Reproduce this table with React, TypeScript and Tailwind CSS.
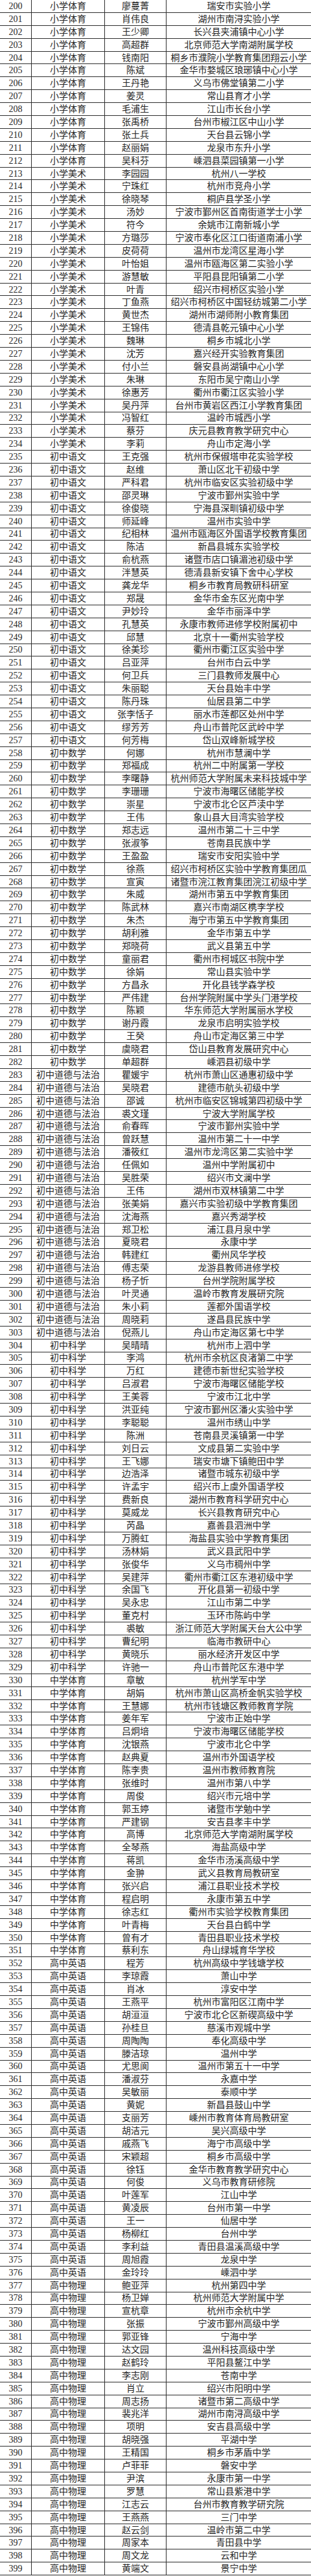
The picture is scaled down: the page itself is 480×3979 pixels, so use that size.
import React from "react";

const groups: [string, string][] = [
  ["小学体育", `廖蔓菁|瑞安市实验小学
肖伟良|湖州市南浔实验小学
王少卿|长兴县夹浦镇中心小学
高超群|北京师范大学南湖附属学校
钱南阳|桐乡市濮院小学教育集团翔云小学
陈斌|金华市婺城区琅琊镇中心小学
王丹艳|义乌市佛堂镇第二小学
姜灵|常山县育才小学
毛浦生|江山市长台小学
张禹桥|台州市椒江区中山小学
张土兵|天台县云锦小学
赵丽娟|龙泉市东升小学
吴科芬|嵊泗县菜园镇第一小学`],
  ["小学美术", `李园园|杭州八一学校
宁珠红|杭州市竞舟小学
徐晓琴|桐庐县学圣小学
汤妙|宁波市鄞州区首南街道学士小学
符今|余姚市江南新城小学
方璐莎|宁波市奉化区江口街道南浦小学
皮荷荷|温州市龙湾区星海小学
叶怡姐|温州市瓯海区第二实验小学
游慧敏|平阳县昆阳镇第二小学
叶青|绍兴市柯桥区实验小学
丁鱼燕|绍兴市柯桥区中国轻纺城第二小学
黄世杰|湖州市湖师附小教育集团
王锦伟|德清县乾元镇中心小学
魏琳|桐乡市城北小学
沈芳|嘉兴经开实验教育集团
付小兰|磐安县尚湖镇中心小学
朱琳|东阳市吴宁南山小学
徐惠芳|衢州市衢江区实验小学
吴丹萍|台州市黄岩区西江小学教育集团
冯智红|温岭市城西小学
蔡芬|庆元县教育教学研究中心
李莉|舟山市定海小学`],
  ["初中语文", `王克强|杭州市保俶塔申花实验学校
赵维|萧山区北干初级中学
严科君|杭州市临安区实验初级中学
邵灵琳|宁波市鄞州实验中学
徐俊晓|宁海县深甽镇初级中学
师延峰|温州市实验中学
纪相林|温州市瓯海区外国语学校教育集团
陈洁|新昌县城东实验学校
俞杭燕|诸暨市店口镇湄池初级中学
泮慧英|德清县新安镇下舍中心学校
龚龙华|桐乡市教育局教研科研室
郑晟|金华市金东区光南中学
尹妙玲|金华市丽泽中学
孔慧英|永康市教师进修学校附属初中
邱慧|北京十一衢州实验学校
徐美珍|衢州市衢江区实验中学
吕亚萍|台州市白云中学
何卫兵|三门县教师发展中心
朱丽聪|天台县始丰中学
陈丹珠|仙居县第二中学
张李恬子|丽水市莲都区处州中学
缪芳芳|舟山市普陀区武岭中学
何芳梅|岱山双峰新城学校`],
  ["初中数学", `何娜|杭州市慧澜中学
郑福成|杭州二中附属第一学校
李曙静|杭州师范大学附属未来科技城中学
李珊珊|宁波市海曙区储能学校
崇星|宁波市北仑区芦渎中学
王伟|象山县大目湾实验学校
郑志远|温州市第二十三中学
张淑筝|苍南县民族中学
王盈盈|瑞安市安阳实验中学
徐燕|绍兴市柯桥区实验中学教育集团瓜
宣寅|诸暨市浣江教育集团浣江初级中学
朱威|湖州市第五中学教育集团
陈武林|嘉兴市南湖区槜李学校
朱杰|海宁市第五中学教育集团
胡利雅|金华市第五中学
郑晓荷|武义县第五中学
童丽君|衢州市柯城区书院中学
徐娟|常山县实验中学
方昌永|开化县钱学森学校
严伟建|台州学院附属中学头门港学校
陈颖|华东师范大学附属丽水学校
谢丹霞|龙泉市启明实验学校
王癸|舟山市定海区第三中学
虞晓君|岱山县教育发展研究中心
单超群|嵊泗县初级中学`],
  ["初中道德与法治", `瞿媛宇|杭州市萧山区通惠初级中学
吴晓君|建德市航头初级中学
邵诚|杭州市临安区锦城第四初级中学
裘文瑾|宁波大学附属学校
俞春晖|宁波市鄞州实验中学
曾跃慧|温州市第二十一中学
潘筱红|温州市龙湾区第二实验中学
任佩如|温州中学附属初中
吴胜荣|绍兴市文澜中学
王伟|湖州市双林镇第二中学
张美娟|嘉兴市实验初级中学教育集团
沈海燕|嘉兴秀湖学校
郑卫松|浦江县月泉中学
夏晓君|永康中学
韩建红|衢州风华学校
傅志荣|龙游县教师进修学校
杨子忻|台州学院附属学校
叶灵通|温岭市教育发展研究院
朱小莉|莲都外国语学校
周晓莉|遂昌县民族中学
倪燕儿|舟山市定海区第七中学`],
  ["初中科学", `吴晴晴|杭州市上泗中学
李鸿|杭州市余杭区良渚第二中学
万红|建德市新世纪实验学校
吕淑君|宁波市海曙区储能学校
王美蓉|宁波市江北中学
洪亚纯|宁波市鄞州区潘火实验中学
李聪聪|温州市绣山中学
陈洲|苍南县灵溪镇第一中学
刘日云|文成县第二实验中学
王飞娜|瑞安市塘下镇鲍田中学
边浩泽|诸暨市城东初级中学
许孟宇|绍兴市上虞外国语学校
费新良|湖州市教育科学研究中心
莫威龙|长兴县教育研究中心
芮晶|嘉善县泗洲中学
万腾虹|海盐县实验中学教育集团
汤林娟|武义县武阳中学
张俊华|义乌市稠州中学
吴建萍|衢州市衢江区东港初级中学
余国飞|开化县第一初级中学
吴永忠|江山市第二中学
董克村|玉环市陈屿中学
裘敏|浙江师范大学附属天台大公中学
曹纪明|临海市教研中心
黄晓乐|丽水经济开发区中学
许驰一|舟山市普陀区东港中学`],
  ["中学体育", `章敏|杭州学军中学
胡娟|杭州市萧山区高桥金帆实验学校
王慧娜|杭州市钱塘区教师教育学院
姜年军|宁波市正始中学
吕炯培|宁波市海曙区储能学校
沈银燕|宁波市北仑中学
赵典夏|温州市外国语学校
陈李贵|温州市教师教育院
张维时|温州市第八中学
周俊|绍兴市元培中学
郭玉婷|诸暨市学勉中学
严建钢|安吉县孝丰中学
高博|北京师范大学南湖附属学校
全琴燕|海盐高级中学
蒋凯|金华市汤溪高级中学
金翀|武义县教育局教研室
张兴启|浦江县职业技术学校
程启明|永康市第五中学
徐志红|衢州市实验学校教育集团
叶青梅|天台县白鹤中学
曾有才|青田县职业技术学校
蔡利东|舟山绿城育华学校`],
  ["高中英语", `程芳|杭州高级中学钱塘学校
李琼霞|萧山中学
肖冰|淳安中学
王燕平|杭州市富阳区江南中学
胡洹洹|宁波市北仑区新碶高级中学
孙桂旦|慈溪市观城中学
周陶陶|奉化高级中学
滕洁琼|温州中学
尤思阆|温州市第五十一中学
潘淑芬|永嘉中学
吴敏丽|泰顺中学
黄妮|新昌县鼓山中学
支丽芳|嵊州市教育体育局教研室
胡洁元|吴兴高级中学
戚燕飞|海宁市高级中学
宋颖超|桐乡市高级中学
徐钰|金华市教育教学研究中心
何俊|义乌市教育研修院
叶莲军|江山中学
黄凌辰|台州市第一中学
王一|仙居中学
杨柳红|台州中学
李利益|青田县温溪高级中学
周旭霞|龙泉中学
金玲玲|嵊泗中学`],
  ["高中物理", `鲍亚萍|杭州第四中学
杨卫婵|杭州师范大学附属中学
宣杭章|杭州市余杭中学
张振|宁波市鄞州高级中学
郭亚锋|宁海中学
达文园|温州科技高级中学
赵鹤玲|平阳县鳌江中学
李志刚|苍南中学
肖立|绍兴市阳明中学
周志扬|诸暨市第二高级中学
裴兆洋|湖州市南浔高级中学
项明|安吉县高级中学
胡晓强|平湖中学
王精国|桐乡市茅盾中学
卢菲菲|磐安中学
尹滨|永康市第一中学
罗慧|常山县紫港中学
江志云|台州市教育教学研究院
王燕燕|三门中学
赵云剑|温岭市第二中学
周家本|青田县中学
周文龙|云和中学
黄端文|景宁中学`],
];

type Row = { n: number; cat: string; name: string; school: string };

const rows: Row[] = [];
let num = 200;
for (const [cat, block] of groups) {
  for (const line of block.split("\n")) {
    const [name, school] = line.split("|");
    rows.push({ n: num++, cat, name, school });
  }
}

export default function App() {
  return (
    <div
      className="w-[480px] bg-white text-[#262626] text-[14px] leading-none overflow-hidden"
      style={{ fontFamily: '"Liberation Serif", "Noto Sans CJK SC", serif' }}
    >
      {rows.map((r) => (
        <div
          key={r.n}
          className="grid grid-cols-[48px_113px_95px_224px] h-[19.9px] border-b border-[#2e2e2e]"
        >
          <div className="flex items-center justify-center pt-[1px] whitespace-nowrap">
            {r.n}
          </div>
          <div className="flex items-center justify-center border-l border-[#2e2e2e] pt-[1px] whitespace-nowrap">
            {r.cat}
          </div>
          <div className="flex items-center justify-center border-l border-[#2e2e2e] pt-[1px] whitespace-nowrap">
            {r.name}
          </div>
          <div className="flex items-center justify-center border-l border-[#2e2e2e] pt-[1px] whitespace-nowrap">
            {r.school}
          </div>
        </div>
      ))}
    </div>
  );
}
